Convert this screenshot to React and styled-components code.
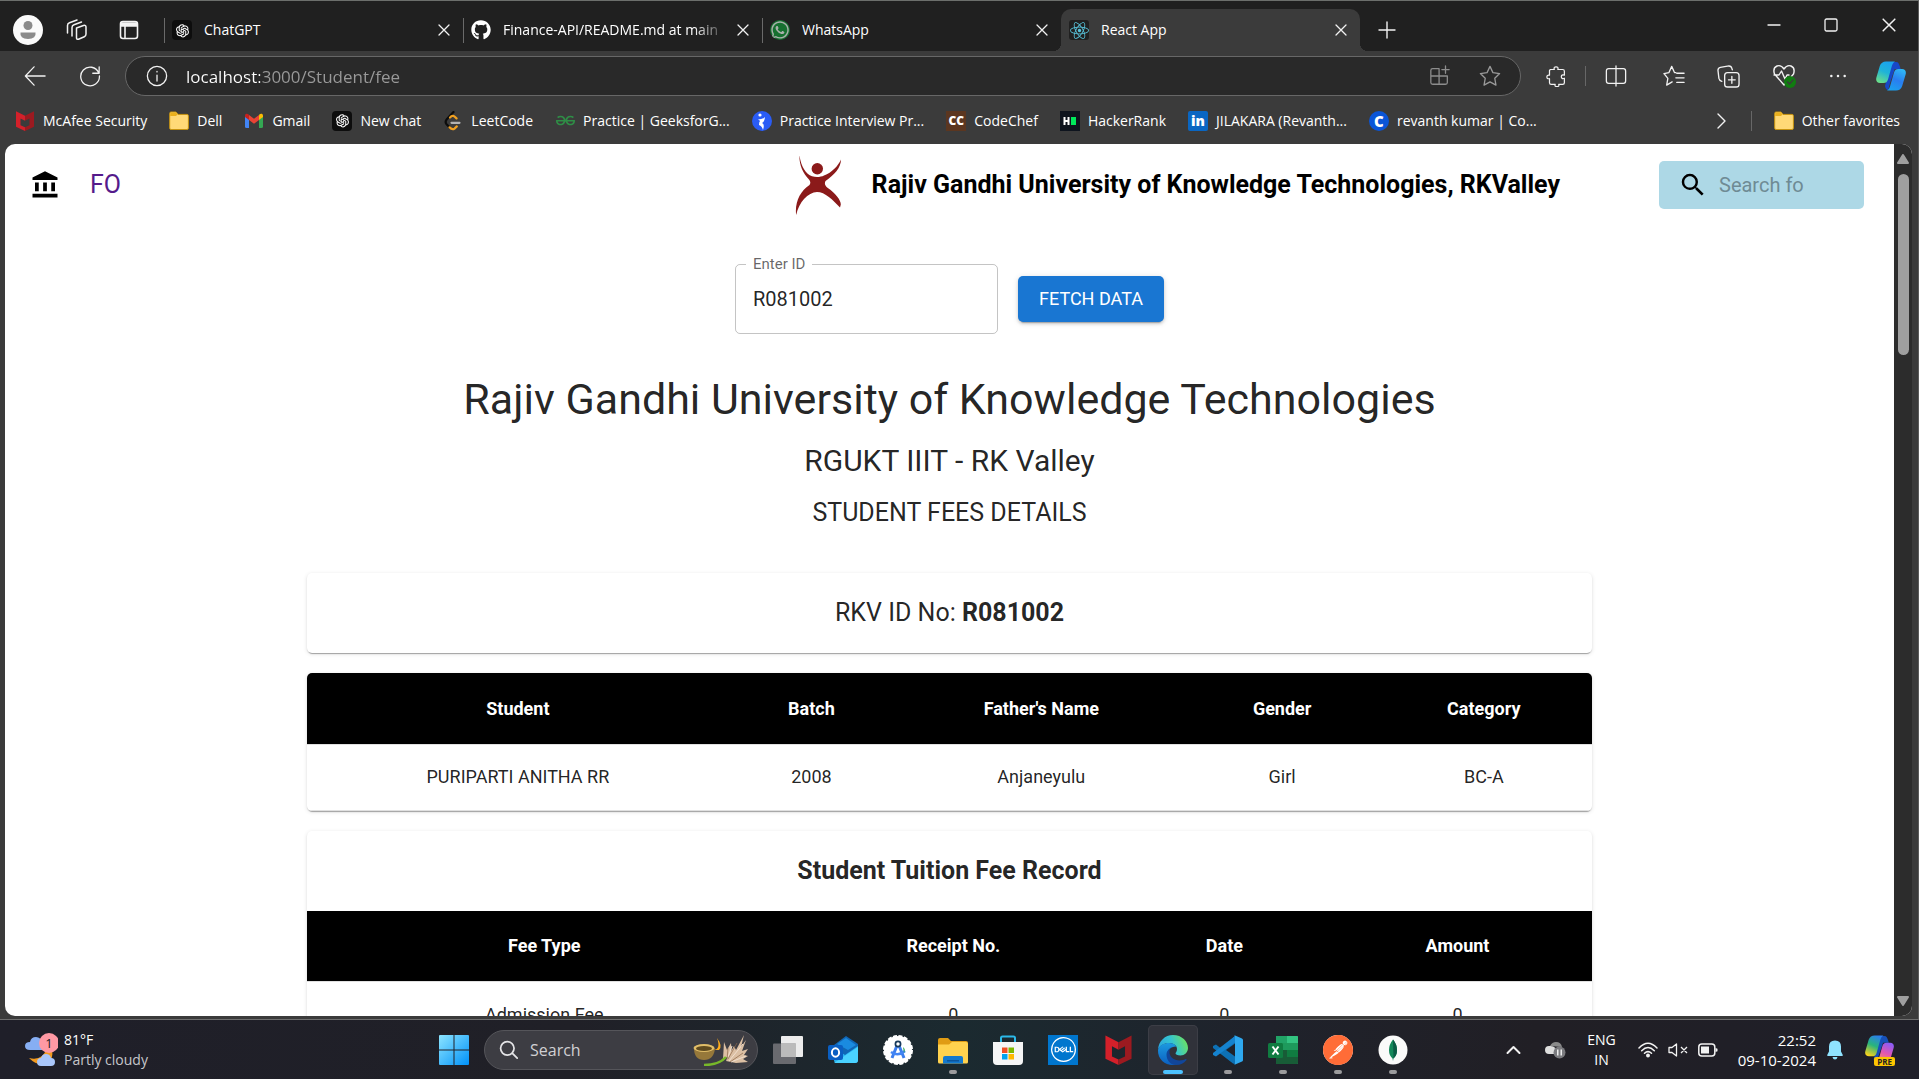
import React from "react";
import styled, { createGlobalStyle, css } from "styled-components";
import { MdAccountBalance, MdSearch } from "react-icons/md";
import { FaGithub, FaWhatsapp, FaReact } from "react-icons/fa";
import { AiOutlineOpenAI } from "react-icons/ai";
import { SiGeeksforgeeks, SiDell, SiPostman } from "react-icons/si";

const GlobalStyle = createGlobalStyle`
  *, *::before, *::after { box-sizing: border-box; }
  body {
    margin: 0;
    overflow: hidden;
    background: #202020;
    font-family: "Open Sans", "Noto Sans", sans-serif;
    font-size: 14px;
    color: #fff;
  }
  button {
    border: 0;
    padding: 0;
    margin: 0;
    background: none;
    color: inherit;
    font: inherit;
    cursor: pointer;
  }
  svg { display: block; flex: none; }
`;

const ui = `"Open Sans", "Noto Sans", sans-serif`;
const roboto = `Roboto, "Liberation Sans", sans-serif`;

/* ---------- window frame ---------- */

const Desktop = styled.div`
  height: 100vh;
  display: flex;
  flex-direction: column;
`;

const Window = styled.div`
  flex: 1;
  min-height: 0;
  display: flex;
  flex-direction: column;
  background: #3b3b3b;
  border-top: 1px solid #6c6f6c;
  border-right: 1px solid #5c5c5c;
  border-bottom: 1px solid #6f6f6f;
`;

const TabStrip = styled.header`
  height: 50px;
  flex: none;
  display: flex;
  background: #202020;
  padding-left: 13px;
`;

const StripTools = styled.div`
  display: flex;
  align-items: center;
  gap: 23px;
  width: 151px;
  padding-top: 8px;
`;

const Avatar = styled.button`
  width: 30px;
  height: 30px;
  border-radius: 50%;
  background: #fafafa;
`;

const Tab = styled.div`
  width: 299px;
  height: 42px;
  margin-top: 8px;
  padding: 0 12px 0 8px;
  display: flex;
  align-items: center;
  gap: 12px;
  position: relative;
  ${(p) =>
    p.$active
      ? css`
          background: #3b3b3b;
          border-radius: 10px 10px 0 0;
          &::before,
          &::after {
            content: "";
            position: absolute;
            bottom: 0;
            width: 8px;
            height: 8px;
          }
          &::before {
            right: 100%;
            background: radial-gradient(circle at 0 0, transparent 8px, #3b3b3b 8px);
          }
          &::after {
            left: 100%;
            background: radial-gradient(circle at 100% 0, transparent 8px, #3b3b3b 8px);
          }
        `
      : css`
          &::before {
            content: "";
            position: absolute;
            left: 0;
            top: 9px;
            width: 1px;
            height: 25px;
            background: #6a6a6a;
          }
        `}
`;

const TabTitle = styled.span`
  flex: 1;
  min-width: 0;
  overflow: hidden;
  white-space: nowrap;
  line-height: 20px;
  padding-bottom: 1px;
  ${(p) => p.$fade && "mask-image: linear-gradient(90deg, #000 86%, transparent 102%);"}
`;

const PlainButton = styled.button`
  display: flex;
  align-items: center;
  justify-content: center;
  width: ${(p) => p.$w || 20}px;
  height: ${(p) => p.$h || 30}px;
  flex: none;
`;

const WindowButtons = styled.div`
  display: flex;
  margin-left: auto;
`;

/* ---------- toolbar ---------- */

const Toolbar = styled.div`
  height: 50px;
  flex: none;
  display: flex;
  align-items: center;
  padding-left: 7px;
`;

const Omnibox = styled.div`
  flex: 1;
  height: 40px;
  margin: 0 6px 0 7px;
  padding: 0 8px 0 16px;
  display: flex;
  align-items: center;
  border: 1px solid #676767;
  border-radius: 20px;
  background: #292929;
`;

const Address = styled.input`
  flex: 1;
  min-width: 0;
  border: 0;
  outline: 0;
  padding: 0;
  margin-left: 14px;
  height: 30px;
  font-family: ${ui};
  font-size: 17px;
  color: #9a9a9a;
  background: linear-gradient(90deg, #fff 74px, #9a9a9a 74px);
  background-clip: text;
  -webkit-background-clip: text;
  -webkit-text-fill-color: transparent;
`;

const Divider = styled.span`
  width: 1px;
  height: 20px;
  background: #676767;
`;

/* ---------- favourites bar ---------- */

const FavoritesBar = styled.nav`
  height: 43px;
  flex: none;
  display: flex;
  align-items: center;
  padding: 0 18px 4px 15px;
  gap: 22px;
`;

const Favorite = styled.a`
  display: flex;
  align-items: center;
  gap: 8px;
  color: #fff;
  text-decoration: none;
  white-space: nowrap;
  line-height: 20px;
`;

const Chip = styled.span`
  width: 20px;
  height: 20px;
  flex: none;
  display: flex;
  align-items: center;
  justify-content: center;
  overflow: hidden;
  border-radius: ${(p) => p.$r || 0}px;
  background: ${(p) => p.$bg || "none"};
  color: ${(p) => p.$fg || "#fff"};
  font-weight: 800;
  font-size: ${(p) => p.$size || 12}px;
  line-height: 20px;
`;

const Spacer = styled.span`
  flex: 1;
`;

/* ---------- viewport ---------- */

const Viewport = styled.div`
  flex: 1;
  min-height: 0;
  display: flex;
  margin: 0 6px 3px 5px;
  border-radius: 10px;
  overflow: hidden;
  background: #fff;
`;

const Page = styled.main`
  flex: 1;
  min-width: 0;
  overflow-y: auto;
  scrollbar-width: none;
  font-family: ${roboto};
  color: rgba(0, 0, 0, 0.87);
`;

const Scrollbar = styled.div`
  width: 18px;
  flex: none;
  display: flex;
  flex-direction: column;
  align-items: center;
  background: #2c2c2c;
`;

const Thumb = styled.div`
  width: 11px;
  height: 181px;
  border-radius: 6px;
  background: #9f9f9f;
  margin-bottom: auto;
`;

const SiteHeader = styled.header`
  display: flex;
  align-items: center;
  height: 81px;
  padding: 0 30px 0 25px;
`;

const HomeLink = styled.a`
  margin-left: 30px;
  font-size: 25px;
  line-height: 40px;
  color: #551a8b;
  text-decoration: none;
`;

const Brand = styled.div`
  display: flex;
  align-items: center;
  gap: 30px;
  margin: 0 99px 0 auto;
  font-size: 25px;
  font-weight: 700;
  line-height: 40px;
  color: #000;
`;

const SiteSearch = styled.label`
  width: 205px;
  height: 48px;
  display: flex;
  align-items: center;
  gap: 11px;
  padding-left: 19px;
  border-radius: 5px;
  background: #add8e6;
  color: #000;
  input {
    width: 85px;
    border: 0;
    padding: 0;
    outline: 0;
    background: none;
    font-family: ${roboto};
    font-size: 20px;
    line-height: 30px;
  }
  input::placeholder {
    color: #6f8b94;
  }
`;

const LookupForm = styled.form`
  display: flex;
  justify-content: center;
  align-items: center;
  gap: 20px;
  margin-top: 39px;
`;

const Field = styled.div`
  position: relative;
  label {
    position: absolute;
    left: 11px;
    top: -9px;
    padding: 0 7px;
    background: #fff;
    font-size: 15px;
    line-height: 18px;
    color: rgba(0, 0, 0, 0.6);
  }
  input {
    display: block;
    width: 263px;
    height: 70px;
    padding: 0 17px;
    border: 1px solid rgba(0, 0, 0, 0.23);
    border-radius: 5px;
    outline: 0;
    background: none;
    font-family: ${roboto};
    font-size: 20px;
    color: rgba(0, 0, 0, 0.87);
  }
`;

const PrimaryButton = styled.button`
  width: 146px;
  height: 46px;
  border-radius: 5px;
  background: #1976d2;
  color: #fff;
  font-family: ${roboto};
  font-size: 18px;
  font-weight: 400;
  line-height: 30px;
  box-shadow: 0 4px 1px -3px rgba(0, 0, 0, 0.2), 0 2px 3px rgba(0, 0, 0, 0.14),
    0 1px 6px rgba(0, 0, 0, 0.12);
`;

const Titles = styled.div`
  margin-top: 39px;
  text-align: center;
`;

const Title = styled.h1`
  margin: 0;
  font-weight: 400;
  font-size: 43px;
  line-height: 52px;
`;

const Subtitle = styled.h2`
  margin: 16px 0 0;
  font-weight: 400;
  font-size: 30px;
  line-height: 40px;
`;

const Section = styled.h3`
  margin: 12px 0 0;
  font-weight: 400;
  font-size: 25px;
  line-height: 40px;
`;

const Records = styled.div`
  width: 68%;
  margin: 40px auto 0;
  display: flex;
  flex-direction: column;
  gap: 20px;
`;

const Card = styled.section`
  border-radius: 5px;
  overflow: hidden;
  background: #fff;
  box-shadow: 0 3px 1px -2px rgba(0, 0, 0, 0.2), 0 1px 1px rgba(0, 0, 0, 0.14),
    0 1px 4px rgba(0, 0, 0, 0.12);
`;

const CardTitle = styled.h4`
  margin: 0;
  padding: 20px;
  text-align: center;
  font-size: 25px;
  line-height: 40px;
  font-weight: ${(p) => (p.$bold ? 700 : 400)};
  strong {
    font-weight: 700;
  }
`;

const Table = styled.table`
  width: 100%;
  table-layout: fixed;
  border-collapse: collapse;
  text-align: center;
  font-size: 18px;
  th {
    height: 71px;
    padding: 0;
    background: #000;
    color: #fff;
    font-weight: 700;
    border-bottom: 1px solid #e0e0e0;
  }
  td {
    height: 66px;
    padding: 0;
    line-height: 26px;
    border-bottom: 1px solid #e0e0e0;
  }
`;

const Col = styled.col`
  width: ${(p) => p.$w}%;
`;

function DataTable({ columns, rows }) {
  return (
    <Table>
      <colgroup>
        {columns.map(([name, w]) => (
          <Col key={name} $w={w} />
        ))}
      </colgroup>
      <thead>
        <tr>
          {columns.map(([name]) => (
            <th key={name} scope="col">{name}</th>
          ))}
        </tr>
      </thead>
      <tbody>
        {rows.map((row, i) => (
          <tr key={i}>
            {row.map((cell, j) => (
              <td key={j}>{cell}</td>
            ))}
          </tr>
        ))}
      </tbody>
    </Table>
  );
}

/* ---------- taskbar ---------- */

const Taskbar = styled.footer`
  height: 59px;
  flex: none;
  display: grid;
  grid-template-columns: 431px auto 1fr;
  align-items: center;
  background: linear-gradient(90deg, #1f1f29 0%, #202027 30%, #1b2a30 50%, #1f222b 66%, #211f25 80%, #1f1f29 100%);
`;

const Weather = styled.button`
  display: flex;
  align-items: center;
  gap: 6px;
  margin-left: 24px;
  text-align: left;
  line-height: 20px;
  small {
    display: block;
    font-size: 14px;
    color: #c6c6ca;
  }
`;

const Apps = styled.div`
  display: flex;
  align-items: center;
`;

const TaskSearch = styled.label`
  width: 274px;
  height: 40px;
  margin: 0 5px 0 7px;
  padding: 0 8px 0 14px;
  display: flex;
  align-items: center;
  gap: 12px;
  border: 1px solid #55555a;
  border-radius: 20px;
  background: #3d3d43;
  input {
    flex: 1;
    min-width: 0;
    border: 0;
    padding: 0;
    outline: 0;
    background: none;
    font-family: ${ui};
    font-size: 16px;
  }
  input::placeholder {
    color: #d0d0d3;
  }
`;

const AppButton = styled.button`
  width: 50px;
  height: 50px;
  margin-right: 5px;
  border-radius: 5px;
  display: flex;
  align-items: center;
  justify-content: center;
  position: relative;
  ${(p) => p.$state === "active" && "background: #30323a; box-shadow: inset 0 0 0 1px #3c3e46;"}
  &::after {
    content: "";
    position: absolute;
    bottom: 1px;
    height: 4px;
    border-radius: 2px;
    ${(p) => p.$state === "open" && "width: 8px; background: #9b9b9d;"}
    ${(p) => p.$state === "active" && "width: 20px; background: #4cc2ff;"}
  }
`;

const Tray = styled.div`
  display: flex;
  align-items: center;
  justify-content: flex-end;
  padding-right: 25px;
`;

const TrayText = styled.button`
  line-height: 20px;
  font-size: ${(p) => (p.$clock ? 15 : 14)}px;
  text-align: ${(p) => (p.$clock ? "right" : "center")};
  span {
    display: block;
  }
`;

const TrayGroup = styled.button`
  display: flex;
  align-items: center;
  gap: 10px;
  margin: 0 20px 0 22px;
`;

/* ---------- drawings ---------- */

const Line = ({ w = 22, h = w, vb = 24, s = 1.4, c = "#f2f2f2", children }) => (
  <svg width={w} height={h} viewBox={`0 0 ${vb} ${vb}`} fill="none" stroke={c} strokeWidth={s} strokeLinecap="round" strokeLinejoin="round">
    {children}
  </svg>
);

const Cross = ({ size = 12 }) => (
  <Line w={size} vb={12} s={1.3}><path d="M1 1l10 10M11 1L1 11" /></Line>
);

const Folder = () => (
  <svg width="20" height="20" viewBox="0 0 20 20">
    <path d="M.7 2.4Q.7 1 2 1h5l2 2.4H18q1.4 0 1.4 1.4v12.4q0 1.3-1.4 1.3H2q-1.300 0-1.300-1.300z" fill="#ffd977" stroke="#c7930f" />
    <path d="M1.200 5V2.500q0-1 1-1h4.600L8.500 3.400 7 5z" fill="#eab01c" />
  </svg>
);

const Gmail = () => (
  <svg width="20" height="20" viewBox="0 0 20 20">
    <path d="M1 5v10.500Q1 17 2.500 17H5V8z" fill="#4285f4" />
    <path d="M19 5v10.500q0 1.500-1.500 1.500H15V8z" fill="#34a853" />
    <path d="M15 4.500V9l4-3V4.500C19 2.500 16.800 2.200 15.500 3.200z" fill="#fbbc04" />
    <path d="M5 4.500V9L1 6V4.500C1 2.500 3.200 2.200 4.500 3.200z" fill="#c5221f" />
    <path d="M5 4v5l5 3.800L15 9V4l-5 3.800z" fill="#ea4335" />
  </svg>
);

const McAfee = ({ w = 20, h = 20 }) => (
  <svg width={w} height={h} viewBox="0 0 20 20" preserveAspectRatio="none">
    <path d="M1 .3l9 4.500v5L5.500 7.500v6.800L10 16.300V20l-9-4.200z" fill="#d4202a" />
    <path d="M19 .3l-9 4.500v5l4.500-2.300v6.800L10 16.300V20l9-4.200z" fill="#9c1a20" />
  </svg>
);

const LeetCode = () => (
  <svg width="20" height="20" viewBox="0 0 20 20" fill="none" strokeWidth="2.200" strokeLinecap="round">
    <path d="M10.500 1L3.800 8.200Q1.500 11 3.800 13.500L6.500 16.300" stroke="#0c0c0c" />
    <path d="M7 6.500l1.500-1.300q1.500-1 3 .3l2 1.900M6.500 16.300q2.600 3 5 1.300l2.300-2.200" stroke="#f0a020" />
    <path d="M8.500 11.800h8" stroke="#b3b3b3" />
  </svg>
);

const Copilot = ({ w = 30, id, stops }) => (
  <svg width={w} height={w} viewBox="0 0 30 30">
    <defs>
      <linearGradient id={id + "a"} x1="0.700" y1="0" x2="0.300" y2="1">
        {stops[0].map((c, i) => <stop key={i} offset={i / (stops[0].length - 1)} stopColor={c} />)}
      </linearGradient>
      <linearGradient id={id + "b"} x1="0.700" y1="0" x2="0.300" y2="1">
        {stops[1].map((c, i) => <stop key={i} offset={i / (stops[1].length - 1)} stopColor={c} />)}
      </linearGradient>
    </defs>
    <path d="M15 1h5c2.500 0 3 2 3.700 4l1 3h-6L14 22c-1 4-2 7-1 7-3 0-3.500-2-4-4z" fill={stops[2]} />
    <path d="M10 .5h9c-2 1-2.700 3-3.300 5L12 18.500c-.8 2.500-2 3.500-4.500 3.500H4c-3 0-4.500-2-3.600-5.500L3.800 5C4.800 2 7 .5 10 .5z" fill={`url(#${id}a)`} />
    <path d="M20 29.500h-9c2-1 2.700-3 3.300-5L18 11.500c.8-2.500 2-3.500 4.500-3.500H26c3 0 4.500 2 3.600 5.500L26.200 25c-1 3-3.200 4.500-6.200 4.500z" fill={`url(#${id}b)`} />
  </svg>
);

const UniversityLogo = () => (
  <svg width="47" height="60" viewBox="0 0 47 60" fill="#8b1a1a" role="img" aria-label="University">
    <circle cx="22.300" cy="13.800" r="5.700" />
    <path d="M4.500.5C6 12 11 19 17 21.300c4 1.200 9 .8 12-.8C37 17.500 43 11 46 4.500 46 13 39 20 30.500 26c-1.300 2.500-.5 4.800 2 6.800 8 5.500 13.500 12.500 13.300 16.700L45 52.500C38 45 30 37 22 37 13 37.300 4 47 1.200 60-.5 48 5 36 14.500 30c1.300-2 1-3.600-.5-5.500C7.500 18 4 9 4.500.5z" />
  </svg>
);

const WeatherIcon = () => (
  <svg width="34" height="36" viewBox="0 0 34 36">
    <path d="M28 18q2 9-5 13-9 4-18-5 8 2 13-2 3-3 4-6z" fill="#f39a1e" />
    <path d="M6 18q-5 0-5-4t5-4q1-5 6-5t6 6v7z" fill="#86aef3" />
    <path d="M17 34q-4 0-4-4t4-4q1-4 5-4t5 4q4 0 4 4t-4 4z" fill="#a9c6fa" />
    <circle cx="25" cy="11" r="10" fill="#ff99a4" />
    <text x="25" y="16" textAnchor="middle" fontFamily="Open Sans, sans-serif" fontSize="13" fill="#1b1b1b">1</text>
  </svg>
);

const WindowsLogo = () => (
  <svg width="30" height="30" viewBox="0 0 30 30">
    <defs>
      <linearGradient id="win" x1="0" y1="0" x2="1" y2="1">
        <stop offset="0" stopColor="#8de5ff" />
        <stop offset="1" stopColor="#0091f8" />
      </linearGradient>
    </defs>
    <path d="M0 1q0-1 1-1h13.500v14.500H0zM15.500 0H29q1 0 1 1v13.500H15.500zM0 15.500h14.500V30H1q-1 0-1-1zM15.500 15.500H30V29q0 1-1 1H15.500z" fill="url(#win)" />
  </svg>
);

const HarvestArt = () => (
  <svg width="56" height="32" viewBox="0 0 56 32">
    <path d="M33 27L41 12l2 4 8-15-3 12 5-7-4 11 6-2-4 6 4 1-5 3 5 3-12 1z" fill="#dcc0a4" />
    <path d="M30 25L31 8l3 8 4-7 1 12z" fill="#dcc0a4" />
    <path d="M36 27l14-17M34 26l5-14M38 28l15-6" stroke="#f1dfce" fill="none" />
    <path d="M34 26l1-12M37 28l13-9M35 25l9-16" stroke="#8b6548" strokeWidth=".7" fill="none" />
    <path d="M11 31q15 0 22-8" stroke="#78b82a" strokeWidth="2.500" fill="none" />
    <path d="M1 14q0 12 10 12t11-12z" fill="#96783a" />
    <ellipse cx="11" cy="14" rx="10.500" ry="4" fill="#e0bd68" />
    <ellipse cx="11" cy="14.500" rx="8" ry="2.500" fill="#5f4a1e" />
    <path d="M21 16q7-1 3-12 6 8 2 12z" fill="#ffae1d" />
  </svg>
);

const AppIcon = ({ children }) => (
  <svg width="30" height="30" viewBox="0 0 30 30">{children}</svg>
);

const icons = {
  taskview: (
    <AppIcon>
      <path d="M8 2q0-1 1-1h20q1 0 1 1v19q0 1-1 1H8z" fill="#ececec" />
      <path d="M0 9.500q0-1 1-1h21q1 0 1 1V28q0 1-1 1H1q-1 0-1-1z" fill="#77777b" opacity=".85" />
      <path d="M8 8.500h15V22H8z" fill="#bbb" />
    </AppIcon>
  ),
  outlook: (
    <AppIcon>
      <path d="M6 10L18 1l12 8v5L18 22 6 14z" fill="#1066b5" />
      <path d="M9 9l9-6 10 7-8 5z" fill="#1a8be0" />
      <path d="M6 13v12q0 3 3 3h18q3 0 3-3V11L17 20z" fill="#28b3f0" />
      <path d="M6 28L30 12v13q0 3-3 3z" fill="#4ad2ff" />
      <rect x="0" y="10" width="15" height="15" rx="2" fill="#0a5fc2" />
      <ellipse cx="7.500" cy="17.500" rx="3.600" ry="4.200" fill="none" stroke="#fff" strokeWidth="2" />
    </AppIcon>
  ),
  studio: (
    <AppIcon>
      <circle cx="15" cy="15" r="14" fill="#fff" stroke="#fff" strokeWidth="2" strokeDasharray="4 1.500" />
      <path d="M15 8l-6 15M15 8l6 15" stroke="#3b7ded" strokeWidth="3" fill="none" />
      <path d="M8 17q7 5 14-1" stroke="#4285f4" strokeWidth="2.500" fill="none" />
      <circle cx="15" cy="9" r="2.600" fill="#fff" stroke="#17395a" strokeWidth="1.700" />
      <path d="M20 12q3 2 1 6" fill="#34a853" />
    </AppIcon>
  ),
  explorer: (
    <AppIcon>
      <path d="M0 5q0-2 2-2h8l3 3h15q2 0 2 2v6H0z" fill="#e09c14" />
      <path d="M0 9.500h11l3-2.500h14q2 0 2 2v18q0 1.500-1.500 1.500h-27Q0 28.500 0 27z" fill="#ffd24e" />
      <path d="M5 28.500V23q0-2 2-2h16q2 0 2 2v5.500z" fill="#1379ce" />
      <path d="M9 25h12v1.500H9z" fill="#0b559c" />
    </AppIcon>
  ),
  store: (
    <AppIcon>
      <path d="M8 8V3q0-1.500 1.500-1.500h11Q22 1.500 22 3v5" fill="none" stroke="#2bb8e8" strokeWidth="2" />
      <path d="M0 7h30v19q0 4-4 4H4q-4 0-4-4z" fill="#f5f5f5" />
      <path d="M9 12.500h5.500V18H9z" fill="#f05024" />
      <path d="M15.500 12.500H21V18h-5.500z" fill="#7db901" />
      <path d="M9 19h5.500v5.500H9z" fill="#00a3ee" />
      <path d="M15.500 19H21v5.500h-5.500z" fill="#feb800" />
    </AppIcon>
  ),
  edge: (
    <svg width="32" height="32" viewBox="0 0 32 32">
      <defs>
        <linearGradient id="eg1" x1="0" y1=".6" x2="1" y2=".3">
          <stop offset="0" stopColor="#2aa6e0" />
          <stop offset=".5" stopColor="#35c4d0" />
          <stop offset="1" stopColor="#6fe35a" />
        </linearGradient>
        <linearGradient id="eg2" x1="0" y1="0" x2="0" y2="1">
          <stop offset="0" stopColor="#1c9ae0" />
          <stop offset="1" stopColor="#0b5fc0" />
        </linearGradient>
      </defs>
      <path d="M1 16C1.500 7 8 1 16 1c9 0 15 6.500 15 13 0 4.500-3.500 7.500-7.500 7.500-3.500 0-5-1.200-5-2.200 0-.8 1.500-1.500 1.500-4.300C20 11.500 16.500 9 12 9 7 9 2 12 1 16z" fill="url(#eg1)" />
      <path d="M1 16c1-4.500 6-7 11-7 3.500 0 6.500 1.500 7.500 3.600C13 12.500 10.500 16.500 10.500 20c0 5 4.500 9.500 9.500 9.800-1.500.8-3 1.200-4.500 1.200C8 31 .5 25 1 16z" fill="url(#eg2)" />
      <path d="M12.500 17c-.5 6 4.500 9.500 10 9.500 3 0 5-1 6.200-1.500.8-.2 1.100.5.6 1.200C27 29.200 23.500 31 19.500 31 13 31 9.500 26 9.500 20.500c0-3.500 3-6 5-7.200-1 1.200-1.900 2.500-2 3.700z" fill="#11469a" />
    </svg>
  ),
  code: (
    <AppIcon>
      <path d="M22 1L8 13.500 3 9.500 0 11v2l20 15.500L22 29z" fill="#0d76bd" opacity=".95" />
      <path d="M22 1L0 18v2l3 1.500 19-14z" fill="#1583cf" />
      <path d="M21 0l8 3.500q1 .5 1 1.500v20q0 1-1 1.500L21 30q1-.5 1-2V2q0-1.500-1-2z" fill="#2ea8ef" />
      <path d="M22 8.500v13L13 15z" fill="#1f232c" />
    </AppIcon>
  ),
  excel: (
    <AppIcon>
      <path d="M9 1h20q1 0 1 1v26q0 1-1 1H9q-1 0-1-1V2q0-1 1-1z" fill="#1e9a5c" />
      <path d="M19 1h10q1 0 1 1v6H19z" fill="#33c481" />
      <path d="M8 1h11v7H8z" fill="#21a366" />
      <path d="M8 15h22v13q0 1-1 1H8z" fill="#185c37" />
      <path d="M19 15h11v7H19z" fill="#107c41" />
      <rect x="0" y="8" width="15" height="15" rx="1.500" fill="#107c41" />
      <path d="M4.500 11.500l6 8M10.500 11.500l-6 8" stroke="#fff" strokeWidth="2" />
    </AppIcon>
  ),
  mongo: (
    <AppIcon>
      <circle cx="15" cy="15" r="14.500" fill="#fafafa" />
      <path d="M15 4.500q4 5 4 10.500t-3.500 8.500L15 26l-.5-2.500Q11 20.500 11 15t4-10.500z" fill="#13885a" />
      <path d="M15 4.500q4 5 4 10.500t-3.500 8.500z" fill="#0b5b45" />
    </AppIcon>
  ),
};

/* ---------- data ---------- */

const tabs = [
  { title: "ChatGPT", icon: <Chip $bg="#0d0d0d" $r={4}><AiOutlineOpenAI size={17} /></Chip> },
  { title: "Finance-API/README.md at main", fade: true, icon: <Chip><FaGithub size={20} /></Chip> },
  { title: "WhatsApp", icon: <Chip $bg="#16702f" $r={10} $fg="#a8b0aa"><FaWhatsapp size={20} /></Chip> },
  { title: "React App", active: true, icon: <Chip $bg="#202020" $r={3} $fg="#58c4dc"><FaReact size={19} /></Chip> },
];

const favorites = [
  ["McAfee Security", <McAfee key="i" />],
  ["Dell", <Folder key="i" />],
  ["Gmail", <Gmail key="i" />],
  ["New chat", <Chip key="i" $bg="#0d0d0d" $r={4}><AiOutlineOpenAI size={17} /></Chip>],
  ["LeetCode", <LeetCode key="i" />],
  ["Practice | GeeksforG...", <Chip key="i" $fg="#2f8d46"><SiGeeksforgeeks size={19} /></Chip>],
  ["Practice Interview Pr...", (
    <Chip key="i" $bg="#2a5cf5" $r={10}>
      <svg width="20" height="20" viewBox="0 0 20 20">
        <circle cx="8" cy="4" r="1.600" fill="#fff" />
        <path d="M6 8q4 1 7-2-.5 5-3 6 3 1 1 7-1-4-4-5 0-3 1-4z" fill="#fff" />
      </svg>
    </Chip>
  )],
  ["CodeChef", <Chip key="i" $bg="#5b3620" $size={12}>CC</Chip>],
  ["HackerRank", (
    <Chip key="i" $bg="#0e141e">
      <svg width="20" height="20" viewBox="0 0 20 20">
        <path d="M4.500 6v8M8.500 6v8M4.500 10h4" stroke="#fff" strokeWidth="2" />
        <path d="M11 6h5v8h-5z" fill="#00e85b" />
      </svg>
    </Chip>
  )],
  ["JILAKARA (Revanth...", <Chip key="i" $bg="#0a66c2" $r={2} $size={14}>in</Chip>],
  ["revanth kumar | Co...", <Chip key="i" $bg="#0a55d8" $r={10} $size={15}>C</Chip>],
];

const apps = [
  ["Task view", icons.taskview],
  ["Outlook", icons.outlook],
  ["Android Studio", icons.studio],
  ["File Explorer", icons.explorer, "open"],
  ["Microsoft Store", icons.store],
  ["Dell", <DellTile key="d" />],
  ["McAfee", <McAfee key="m" w={29} h={30} />],
  ["Edge", icons.edge, "active"],
  ["Code", icons.code, "open"],
  ["Excel", icons.excel, "open"],
  ["Postman", <PostmanDisc key="p" />, "open"],
  ["MongoDB", icons.mongo, "open"],
];

function DellTile() {
  return <Tile $bg="#0076ce"><SiDell size={25} /></Tile>;
}

function PostmanDisc() {
  return <Tile $bg="#fff" $fg="#ff6c37" $r={15}><SiPostman size={30} /></Tile>;
}

const Tile = styled.span`
  width: 30px;
  height: 30px;
  display: flex;
  align-items: center;
  justify-content: center;
  border-radius: ${(p) => p.$r || 0}px;
  background: ${(p) => p.$bg};
  color: ${(p) => p.$fg || "#fff"};
`;

const PreBadge = styled.span`
  position: absolute;
  right: -1px;
  bottom: -2px;
  padding: 0 3px;
  border-radius: 2px;
  background: #fdc500;
  color: #222;
  font-size: 8px;
  font-weight: 700;
  line-height: 9px;
`;

const CopilotTray = styled.button`
  position: relative;
  margin-left: 11px;
`;

/* ---------- app ---------- */

export default function App() {
  return (
    <Desktop>
      <GlobalStyle />
      <Window>
        <TabStrip>
          <StripTools>
            <Avatar aria-label="Profile">
              <svg width="30" height="30" viewBox="0 0 30 30" fill="#8a8a8a">
                <circle cx="15" cy="10.500" r="4.500" />
                <path d="M7.500 17.500h15q1 6-7.500 6.500-8.500-.5-7.500-6.500z" />
              </svg>
            </Avatar>
            <PlainButton aria-label="Workspaces" $w={22}>
              <Line w={22} vb={22} s={1.500}>
                <path d="M10.500 9l7-2.500q2.500-.7 2.500 1.500v7q0 2-1.700 2.700l-5.800 2.500q-2 .6-2-1.400zM6 17V8.500q0-2 2-2.700L15.500 3M1.500 14V6.500q0-2 2-2.700L11 1" />
              </Line>
            </PlainButton>
            <PlainButton aria-label="Tab actions" $w={36}>
              <Line w={20} vb={20} s={1.600}>
                <rect x="1.500" y="1.500" width="17" height="17" rx="2.500" />
                <path d="M2 3h16v3H2z" fill="#f2f2f2" />
                <path d="M6 6v12" />
              </Line>
            </PlainButton>
          </StripTools>
          {tabs.map((t) => (
            <Tab key={t.title} $active={t.active}>
              {t.icon}
              <TabTitle $fade={t.fade}>{t.title}</TabTitle>
              <PlainButton aria-label="Close tab" $w={14}><Cross /></PlainButton>
            </Tab>
          ))}
          <PlainButton aria-label="New tab" $w={54} $h={58}>
            <Line w={18} vb={18}><path d="M9 1v16M1 9h16" /></Line>
          </PlainButton>
          <WindowButtons>
            <PlainButton aria-label="Minimize" $w={57} $h={48}><Line w={14} vb={14}><path d="M1 7h12" /></Line></PlainButton>
            <PlainButton aria-label="Maximize" $w={57} $h={48}><Line w={14} vb={14} s={1.300}><rect x="1" y="1" width="12" height="12" rx="1.500" /></Line></PlainButton>
            <PlainButton aria-label="Close" $w={59} $h={48}><Cross size={14} /></PlainButton>
          </WindowButtons>
        </TabStrip>

        <Toolbar>
          <PlainButton aria-label="Back" $w={55}><Line w={22}><path d="M23 12H2M11 2L1.500 12 11 22" /></Line></PlainButton>
          <PlainButton aria-label="Refresh" $w={56}>
            <Line w={22}><path d="M21.500 8.500A10.200 10.200 0 1 0 22.300 12M22 2v7h-7" /></Line>
          </PlainButton>
          <Omnibox>
            <PlainButton aria-label="Site information" $w={30}>
              <Line w={22}><circle cx="12" cy="12" r="10.500" /><path d="M12 11v6.500M12 7v.5" /></Line>
            </PlainButton>
            <Address aria-label="Address" defaultValue="localhost:3000/Student/fee" />
            <PlainButton aria-label="Install app" $w={56}>
              <Line w={22} c="#8d8d8d"><path d="M4 4h7v8H2V6q0-2 2-2zM2 12h9v9H4q-2 0-2-2zM11 12h9v7q0 2-2 2h-7zM18 1v8M14 5h8" /></Line>
            </PlainButton>
            <PlainButton aria-label="Add to favorites" $w={44}>
              <Line w={22} c="#9a9a9a"><path d="M12 1.500l3.200 6.800 7.300 1-5.300 5.200 1.300 7.500-6.500-3.600L5.500 22l1.300-7.500L1.500 9.300l7.300-1z" /></Line>
            </PlainButton>
          </Omnibox>
          <PlainButton aria-label="Extensions" $w={58}>
            <Line w={21}><path d="M5 4h4.500q-1-3 2-3t2 3H19q2 0 2 2v4.500q-3.500-1-3.500 1.800t3.500 1.700V19q0 2-2 2h-4.500q1 2.500-2 2.500t-2-2.500H6q-2 0-2-2v-4.500q-3 .5-3-2t3-2V5z" /></Line>
          </PlainButton>
          <Divider />
          <PlainButton aria-label="Split screen" $w={60}>
            <Line w={22}><path d="M12 4H4Q1.500 4 1.500 6.500v11Q1.500 20 4 20h8M12 4h8q2.500 0 2.500 2.500v11Q22.500 20 20 20h-8M12 1v22" /></Line>
          </PlainButton>
          <PlainButton aria-label="Favorites" $w={55}>
            <Line w={22}><path d="M14 8.300h-1.500L9.500 1.500 6.500 8.300l-5.500 1 4.300 5.200-1.300 7.500 6-3.600M15 9h8M14 14h9M15 19h8" /></Line>
          </PlainButton>
          <PlainButton aria-label="Collections" $w={55}>
            <Line w={23}><rect x="8" y="8" width="15" height="15" rx="3" /><path d="M15.500 12v7M12 15.500h7M5 17Q2.500 16.500 2 14L1 5.500Q1 3 3.500 2.500l9-1.500Q15 1 15.500 3.500L16 5" /></Line>
          </PlainButton>
          <PlainButton aria-label="Browser essentials" $w={55}>
            <Line w={24}>
              <path d="M12 5q3-4.500 7-3 4.500 2 2.500 8L12 21 2.500 10Q.5 4 5 2q4-1.500 7 3zM2 11h5l2.500-4 3.500 8 2-4h2" />
              <circle cx="18" cy="18" r="6" fill="#107c10" stroke="none" />
              <path d="M15.500 18l2 2 3.500-4" stroke="#3b3b3b" />
            </Line>
          </PlainButton>
          <PlainButton aria-label="Settings and more" $w={53}>
            <Line w={20}><path d="M4 12h.01M12 12h.01M20 12h.01" strokeWidth="3" /></Line>
          </PlainButton>
          <PlainButton aria-label="Copilot" $w={54}>
            <Copilot id="cp" stops={[["#1aa2f0", "#1fb3d8", "#69dd8c"], ["#2fb7f5", "#2a7df0", "#1aa0ee"], "#1748c8"]} />
          </PlainButton>
        </Toolbar>

        <FavoritesBar>
          {favorites.map(([name, icon]) => (
            <Favorite key={name} href="#">{icon}{name}</Favorite>
          ))}
          <Spacer />
          <PlainButton aria-label="More favorites" $w={16}><Line w={16} vb={16}><path d="M5 1l7 7-7 7" /></Line></PlainButton>
          <Divider />
          <Favorite href="#"><Folder />Other favorites</Favorite>
        </FavoritesBar>

        <Viewport>
          <Page>
            <SiteHeader>
              <MdAccountBalance size={30} color="#000" />
              <HomeLink href="#">FO</HomeLink>
              <Brand><UniversityLogo />Rajiv Gandhi University of Knowledge Technologies, RKValley</Brand>
              <SiteSearch>
                <MdSearch size={30} />
                <input aria-label="Search" placeholder="Search for" />
              </SiteSearch>
            </SiteHeader>

            <LookupForm onSubmit={(e) => e.preventDefault()}>
              <Field>
                <input id="student-id" defaultValue="R081002" />
                <label htmlFor="student-id">Enter ID</label>
              </Field>
              <PrimaryButton type="submit">FETCH DATA</PrimaryButton>
            </LookupForm>

            <Titles>
              <Title>Rajiv Gandhi University of Knowledge Technologies</Title>
              <Subtitle>RGUKT IIIT - RK Valley</Subtitle>
              <Section>STUDENT FEES DETAILS</Section>
            </Titles>

            <Records>
              <Card>
                <CardTitle>RKV ID No: <strong>R081002</strong></CardTitle>
              </Card>
              <Card>
                <DataTable
                  columns={[["Student", 32.8], ["Batch", 12.9], ["Father's Name", 22.9], ["Gender", 14.6], ["Category", 16.8]]}
                  rows={[["PURIPARTI ANITHA RR", "2008", "Anjaneyulu", "Girl", "BC-A"]]}
                />
              </Card>
              <Card>
                <CardTitle $bold>Student Tuition Fee Record</CardTitle>
                <DataTable
                  columns={[["Fee Type", 36.9], ["Receipt No.", 26.8], ["Date", 15.4], ["Amount", 20.9]]}
                  rows={[["Admission Fee", "0", "0", "0"]]}
                />
              </Card>
            </Records>
          </Page>
          <Scrollbar>
            <PlainButton aria-label="Scroll up" $w={18}><svg width="12" height="10" viewBox="0 0 12 10"><path d="M6 1l5 8H1z" fill="#9f9f9f" stroke="#9f9f9f" strokeWidth="2" strokeLinejoin="round" /></svg></PlainButton>
            <Thumb />
            <PlainButton aria-label="Scroll down" $w={18}><svg width="12" height="10" viewBox="0 0 12 10"><path d="M6 9L1 1h10z" fill="#9f9f9f" stroke="#9f9f9f" strokeWidth="2" strokeLinejoin="round" /></svg></PlainButton>
          </Scrollbar>
        </Viewport>
      </Window>

      <Taskbar>
        <Weather>
          <WeatherIcon />
          <span>81°F<small>Partly cloudy</small></span>
        </Weather>
        <Apps>
          <PlainButton aria-label="Start" $w={46} $h={50}><WindowsLogo /></PlainButton>
          <TaskSearch>
            <Line w={19} s={2.200} c="#e4e4e6"><circle cx="10.500" cy="10.500" r="8.500" /><path d="M17 17l6 6" /></Line>
            <input aria-label="Search the desktop" placeholder="Search" />
            <HarvestArt />
          </TaskSearch>
          {apps.map(([name, icon, state]) => (
            <AppButton key={name} aria-label={name} $state={state}>{icon}</AppButton>
          ))}
        </Apps>
        <Tray>
          <PlainButton aria-label="Hidden icons"><Line w={15} vb={15} s={2}><path d="M1.500 11L7.500 5l6 6" /></Line></PlainButton>
          <PlainButton aria-label="OneDrive" $w={64}>
            <svg width="22" height="18" viewBox="0 0 22 18">
              <path d="M6 5q2-4 6-4 5 0 6 5z" fill="#8a8a8a" />
              <path d="M5 13q-4 0-4-4t4-4q7-1 10 8z" fill="#dedede" />
              <circle cx="15.500" cy="11.500" r="6" fill="#7b7b7f" />
              <path d="M13.800 8.500v6M17.200 8.500v6" stroke="#fff" strokeWidth="1.300" />
            </svg>
          </PlainButton>
          <TrayText><span>ENG</span><span>IN</span></TrayText>
          <TrayGroup aria-label="Network, volume and battery">
            <svg width="20" height="16" viewBox="0 0 20 16" fill="none" stroke="#f2f2f2" strokeWidth="1.500" strokeLinecap="round">
              <path d="M1 6q9-9.500 18 0M3.700 8.700q6.300-6.500 12.600 0M6.500 11.300q3.500-3.400 7 0" />
              <circle cx="10" cy="13.500" r="1.200" fill="#f2f2f2" />
            </svg>
            <svg width="20" height="14" viewBox="0 0 20 14" fill="none" stroke="#f2f2f2" strokeWidth="1.300" strokeLinejoin="round">
              <path d="M1 4.500h3L8.500 1v12L4 9.500H1zM13 4l6 6M19 4l-6 6" />
            </svg>
            <svg width="20" height="14" viewBox="0 0 20 14">
              <rect x=".8" y="1" width="16" height="12" rx="3" fill="none" stroke="#f2f2f2" strokeWidth="1.500" />
              <path d="M3 3.500h8v7H3zM17.500 5l2 .8v2.400l-2 .8z" fill="#f2f2f2" />
            </svg>
          </TrayGroup>
          <TrayText $clock><span>22:52</span><span>09-10-2024</span></TrayText>
          <PlainButton aria-label="Notifications" $w={38}>
            <svg width="18" height="20" viewBox="0 0 18 20" fill="#8fe3ff">
              <path d="M9 .5q6 0 6 6v5l1.800 3.500q.3 1-.8 1H2q-1.100 0-.8-1L3 11.500v-5q0-6 6-6zM6.500 17h5q-.5 2.500-2.500 2.500T6.500 17z" />
            </svg>
          </PlainButton>
          <CopilotTray aria-label="Copilot preview">
            <Copilot w={29} id="tray" stops={[["#2b7df0", "#28b47c", "#f4d21f"], ["#8b5cf6", "#e356b0", "#f5a34d"], "#1750b8"]} />
            <PreBadge>PRE</PreBadge>
          </CopilotTray>
        </Tray>
      </Taskbar>
    </Desktop>
  );
}
